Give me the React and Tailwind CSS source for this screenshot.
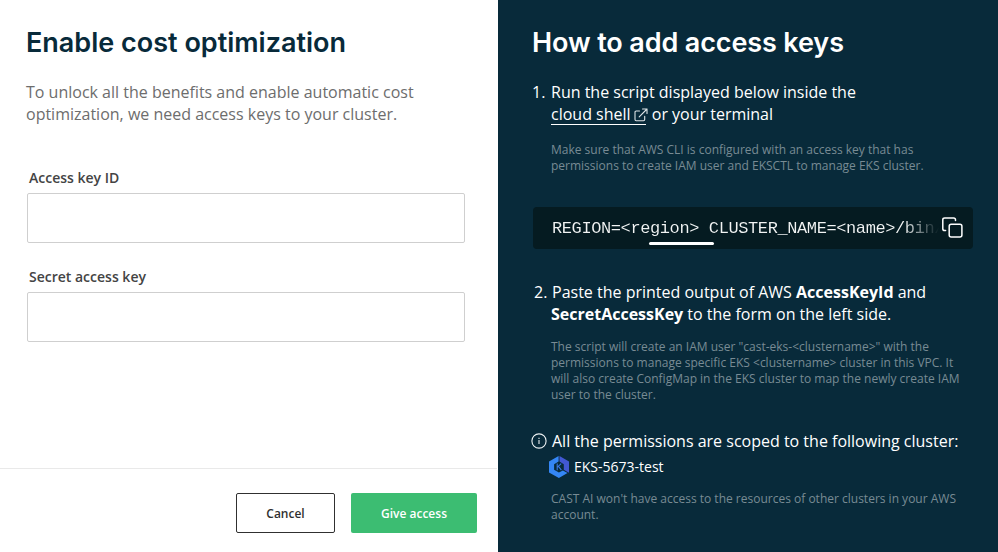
const headingClass =
  "-ml-px font-[Inter,sans-serif] text-[27px] font-semibold leading-[36px] whitespace-nowrap";

function Field({ id, label, className = "" }) {
  return (
    <div className={className}>
      <label htmlFor={id} className="block pl-0.5 text-sm font-semibold leading-5 text-[#444444]">
        {label}
      </label>
      <input id={id} className="mt-[5px] block h-[50px] w-[438px] rounded-xs border border-[#cfcfcf] bg-white px-4 outline-none" />
    </div>
  );
}

function Note({ children, className = "" }) {
  return <p className={`pl-[18px] text-xs leading-4 whitespace-nowrap text-[#788b94] ${className}`}>{children}</p>;
}

function ExternalIcon() {
  return (
    <svg className="ml-[3px] -mr-[2px] inline-block align-[-2px]" width="14" height="14" viewBox="0 0 14 14" fill="none" stroke="#dfe5e8" strokeWidth="1.1" strokeLinecap="round" strokeLinejoin="round">
      <path d="M5.5 3H2.2Q1 3 1 4.2v7.3q0 1.2 1.2 1.2h7.3q1.2 0 1.2-1.2V8.2M8.5 1H13v4.5M13 1 5.2 8.8" />
    </svg>
  );
}

function CopyIcon() {
  return (
    <svg className="mb-0.5 shrink-0" width="21" height="21" viewBox="0 0 21 21" fill="none" stroke="#fff" strokeWidth="1.5" strokeLinecap="round" strokeLinejoin="round">
      <path d="M3.6 13.6H2.7q-1.9 0-1.9-1.9V2.8Q.8 .9 2.7 .9h8.9q1.9 0 1.9 1.9v.8" />
      <rect x="7.2" y="7.2" width="12.7" height="12.7" rx="2" />
    </svg>
  );
}

function InfoIcon() {
  return (
    <svg className="shrink-0" width="16" height="16" viewBox="0 0 16 16" fill="none" stroke="#edf1f3" strokeWidth="1.1">
      <circle cx="8" cy="8" r="7.1" />
      <path d="M8 7v4" />
      <path d="M8 4.8v1.2" />
    </svg>
  );
}

function ClusterLogo() {
  return (
    <svg className="shrink-0" width="20" height="22" viewBox="0 0 20 22">
      <path d="M9.6 0 0 5.4v11L9.9 22l8.6-4.9-4.6-2.7-4 2.2-4.8-2.8V8.2l4.5-2.7z" fill="#3486f5" />
      <path d="M10.5 0 20 5.4v11l-.6.2-4.6-2.8V8.2l-4.3-2.6z" fill="#4258d3" />
      <path d="M8.2 7.6v6.6M12.2 7.6 8.4 11.2M9.5 10.4l2.9 3.8" stroke="#3976df" strokeWidth="1.1" fill="none" />
    </svg>
  );
}

export default function App() {
  return (
    <div className="flex h-[552px] w-[998px] overflow-hidden bg-white font-['Open_Sans',sans-serif]">
      <section className="flex w-[498px] flex-col">
        <div className="flex-1 pl-[27px] pt-[25px]">
          <h1 className={`${headingClass} text-[#082a3a]`}>Enable cost optimization</h1>
          <p className="-ml-px mt-5 text-base leading-[22px] whitespace-nowrap text-[#6d6d6d]">
            To unlock all the benefits and enable automatic cost
            <br />
            optimization, we need access keys to your cluster.
          </p>
          <Field id="access-key" label="Access key ID" className="mt-[43px]" />
          <Field id="secret-key" label="Secret access key" className="mt-6" />
        </div>
        <footer className="mr-px flex h-[84px] justify-end gap-4 border-t border-[#e9e9e9] pr-5 pt-6">
          <button className="h-10 w-[99px] rounded-xs border border-[#303030] pt-0.5 text-xs font-semibold text-[#303030]">Cancel</button>
          <button className="h-10 w-[126px] rounded-xs bg-[#3cbd72] pt-0.5 text-xs font-semibold text-white">Give access</button>
        </footer>
      </section>

      <section className="w-[500px] bg-[#082a3a] pl-[35px] pt-[25px] text-white">
        <h2 className={`${headingClass} tracking-[-0.12px]`}>How to add access keys</h2>
        <div className="mt-5 flex text-base leading-[22px] whitespace-nowrap">
          <span className="-ml-px w-[19px]">1.</span>
          <p>
            Run the script displayed below inside the
            <br />
            <a className="mr-0.5 inline-block h-[22px] border-b border-white">
              cloud shell
              <ExternalIcon />
            </a>{" "}
            or your terminal
          </p>
        </div>
        <Note className="mt-[17px]">
          Make sure that AWS CLI is configured with an access key that has
          <br />
          permissions to create IAM user and EKSCTL to manage EKS cluster.
        </Note>

        <div className="relative mt-[33px] flex h-[42px] w-[440px] items-center rounded-sm bg-[#051b21] pl-[19px]">
          <code className="-mr-[5px] w-[395px] shrink-0 bg-linear-to-r from-[#f2f4f4] from-89% to-[#051b21] to-98% bg-clip-text pt-0.5 font-['Liberation_Mono',monospace] text-[17px] leading-6 tracking-[-0.4px] whitespace-nowrap text-transparent">
            REGION=&lt;region&gt; CLUSTER_NAME=&lt;name&gt;/bin/
          </code>
          <CopyIcon />
          <span className="absolute bottom-1 left-[116px] h-[3px] w-[65px] rounded-xs bg-white" />
        </div>

        <div className="mt-8 flex text-base leading-[22px] whitespace-nowrap">
          <span className="w-[18px] pl-px">2.</span>
          <p>
            <span className="pl-px">Paste the printed output of AWS </span>
            <b>AccessKeyId</b> and
            <br />
            <b>SecretAccessKey</b> to the form on the left side.
          </p>
        </div>
        <Note className="mt-[14px]">
          The script will create an IAM user "cast-eks-&lt;clustername&gt;" with the
          <br />
          permissions to manage specific EKS &lt;clustername&gt; cluster in this VPC. It
          <br />
          will also create ConfigMap in the EKS cluster to map the newly create IAM
          <br />
          user to the cluster.
        </Note>

        <div className="-ml-[2px] mt-[27px] flex items-center gap-[5px] text-base leading-[22px] whitespace-nowrap">
          <InfoIcon />
          <p>All the permissions are scoped to the following cluster:</p>
        </div>
        <div className="ml-4 mt-1 flex items-center gap-[5px] text-sm leading-[22px]">
          <ClusterLogo />
          <span>EKS-5673-test</span>
        </div>
        <Note className="mt-[13px]">
          CAST AI won't have access to the resources of other clusters in your AWS
          <br />
          account.
        </Note>
      </section>
    </div>
  );
}
